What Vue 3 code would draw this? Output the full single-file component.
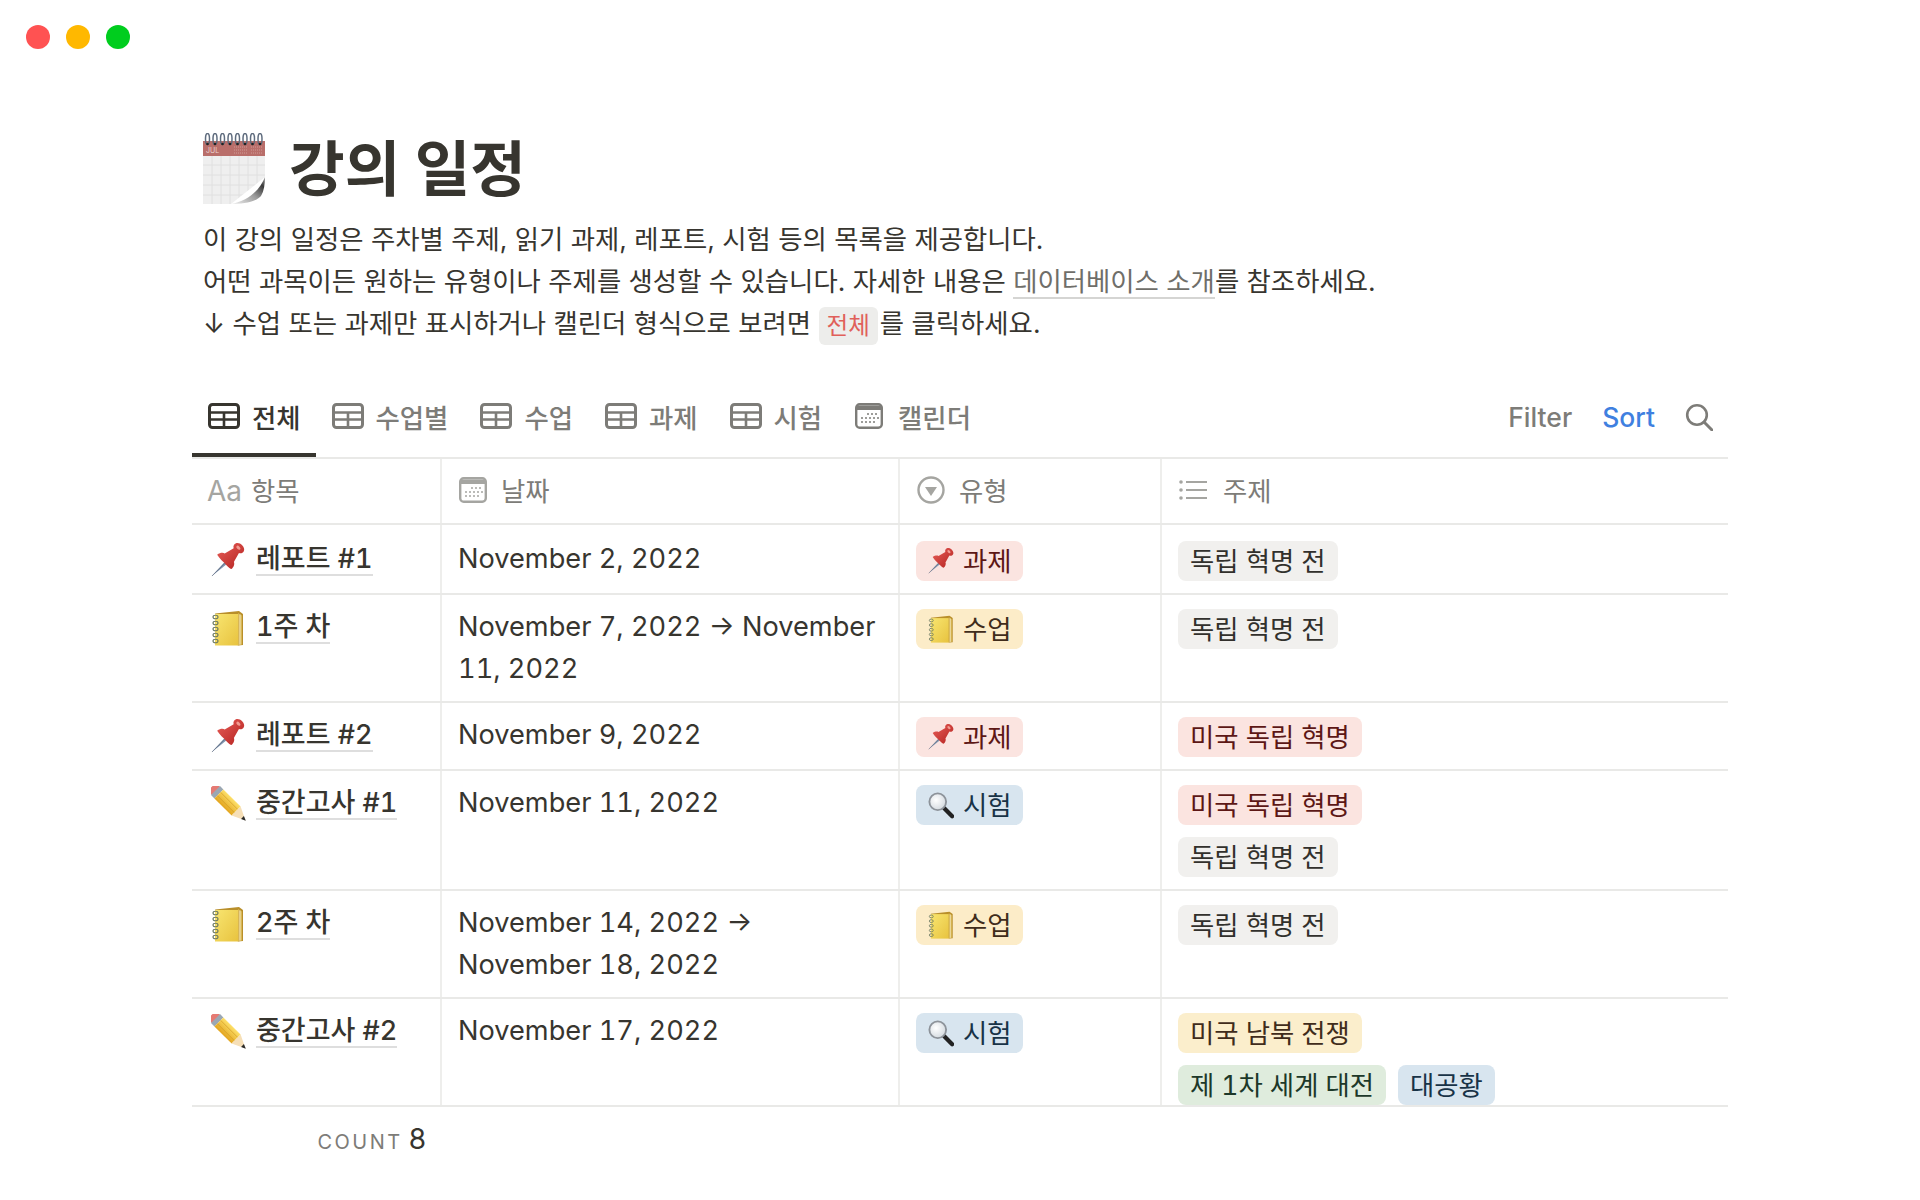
<script setup>
const tabs = [
  { label: '전체', icon: 'table', active: true },
  { label: '수업별', icon: 'table' },
  { label: '수업', icon: 'table' },
  { label: '과제', icon: 'table' },
  { label: '시험', icon: 'table' },
  { label: '캘린더', icon: 'cal' }
]

const columns = [
  { key: 'name', label: '항목' },
  { key: 'date', label: '날짜', icon: 'cal' },
  { key: 'type', label: '유형', icon: 'select' },
  { key: 'topic', label: '주제', icon: 'list' }
]

// type -> emoji + tag colour
const types = {
  report: { label: '과제', emoji: 'pin', color: 'red' },
  lesson: { label: '수업', emoji: 'note', color: 'yellow' },
  exam: { label: '시험', emoji: 'glass', color: 'blue' }
}

const before = { label: '독립 혁명 전', color: 'gray' }
const revolution = { label: '미국 독립 혁명', color: 'red' }

const rows = [
  { emoji: 'pin', name: '레포트 #1', date: 'November 2, 2022', type: 'report', topics: [before] },
  { emoji: 'note', name: '1주 차', date: 'November 7, 2022 → November 11, 2022', type: 'lesson', topics: [before] },
  { emoji: 'pin', name: '레포트 #2', date: 'November 9, 2022', type: 'report', topics: [revolution] },
  { emoji: 'pencil', name: '중간고사 #1', date: 'November 11, 2022', type: 'exam', topics: [revolution, before] },
  { emoji: 'note', name: '2주 차', date: 'November 14, 2022 → November 18, 2022', type: 'lesson', topics: [before] },
  {
    emoji: 'pencil',
    name: '중간고사 #2',
    date: 'November 17, 2022',
    type: 'exam',
    topics: [
      { label: '미국 남북 전쟁', color: 'sand' },
      { label: '제 1차 세계 대전', color: 'green' },
      { label: '대공황', color: 'blue' }
    ]
  }
]
</script>

<template>
  <div class="page">
    <!-- shared icons and emoji artwork -->
    <svg class="defs" aria-hidden="true">
      <defs>
        <linearGradient id="pinRed" x1="0" y1="0" x2="1" y2="1">
          <stop offset="0" stop-color="#e8605a" />
          <stop offset="1" stop-color="#b3201e" />
        </linearGradient>
        <linearGradient id="noteYellow" x1="0" y1="0" x2="1" y2="1">
          <stop offset="0" stop-color="#f8e570" />
          <stop offset="1" stop-color="#e8c33f" />
        </linearGradient>
        <linearGradient id="pencilBody" x1="0" y1="0" x2="0" y2="1">
          <stop offset="0" stop-color="#fde06a" />
          <stop offset="1" stop-color="#e3a51e" />
        </linearGradient>
        <linearGradient id="curl" x1="0" y1="1" x2="1" y2="0">
          <stop offset="0" stop-color="#f4f4f4" />
          <stop offset="0.5" stop-color="#9a9a9a" />
          <stop offset="0.8" stop-color="#3a3a3a" />
          <stop offset="1" stop-color="#a8a8a8" />
        </linearGradient>
        <radialGradient id="glassFill" cx="0.4" cy="0.4" r="0.7">
          <stop offset="0" stop-color="#ffffff" />
          <stop offset="1" stop-color="#cfd6dc" />
        </radialGradient>
      </defs>

      <symbol id="table" viewBox="0 0 32 26">
        <rect x="1.5" y="1.5" width="29" height="23" rx="3" fill="none" stroke="currentColor" stroke-width="3" />
        <path d="M2 9.5h28M2 16.5h28M16 9.5v15" fill="none" stroke="currentColor" stroke-width="2.6" />
      </symbol>
      <symbol id="cal" viewBox="0 0 28 26">
        <rect x="1.2" y="1.2" width="25.6" height="23.6" rx="3.5" fill="none" stroke="currentColor" stroke-width="2.4" />
        <path d="M2 2.5h24v4.5H2z" fill="currentColor" />
        <g fill="currentColor">
          <circle cx="13" cy="11" r="1" /><circle cx="17" cy="11" r="1" /><circle cx="21" cy="11" r="1" />
          <circle cx="7" cy="15" r="1" /><circle cx="11" cy="15" r="1" /><circle cx="15" cy="15" r="1" /><circle cx="19" cy="15" r="1" /><circle cx="23" cy="15" r="1" />
          <circle cx="7" cy="19" r="1" /><circle cx="11" cy="19" r="1" /><circle cx="15" cy="19" r="1" /><circle cx="19" cy="19" r="1" />
        </g>
      </symbol>
      <symbol id="select" viewBox="0 0 28 28">
        <circle cx="14" cy="14" r="12.5" fill="none" stroke="currentColor" stroke-width="2.4" />
        <path d="M8 11h12l-6 9z" fill="currentColor" />
      </symbol>
      <symbol id="list" viewBox="0 0 28 24">
        <g fill="currentColor">
          <circle cx="2" cy="4" r="1.8" /><circle cx="2" cy="12" r="1.8" /><circle cx="2" cy="20" r="1.8" />
          <rect x="7" y="3" width="21" height="2" /><rect x="7" y="11" width="21" height="2" /><rect x="7" y="19" width="21" height="2" />
        </g>
      </symbol>

      <symbol id="pin" viewBox="0 0 36 36">
        <path d="M1 35L14.5 20.5l2 2z" fill="#7f93ad" />
        <path d="M1 35l13.5-14" stroke="#3e4d63" stroke-width="0.6" />
        <path d="M6.5 12.5c3-2.5 6.5-2.5 8 -1.5L24 5.5c-.8-2 .2-4 2-5 2-1 5-.3 7 1.800 2 2.200 2.800 4.700 1.600 6.700-1 1.700-3 2.400-5 1.500l-5.400 9.500c1.200 2-.3 5.800-2.600 7.500-1-.2-2.800-1.600-5.500-4.300-3-3-7-6.600-9.600-10.700z" fill="url(#pinRed)" />
        <ellipse cx="29" cy="5" rx="2.600" ry="1.600" transform="rotate(45 29 5)" fill="#f29b92" />
      </symbol>
      <symbol id="note" viewBox="0 0 32 36">
        <path d="M3 3.500L27 1l4 3v31l-5 0.500z" fill="#b98f2a" />
        <path d="M3 4h23v31.500H3z" fill="url(#noteYellow)" />
        <path d="M26 3l4 2.500v29L26 35.500z" fill="#d8b654" />
        <path d="M28 4.500v30" stroke="#f3e9c0" stroke-width="1" />
        <g fill="none" stroke="#6d7a62" stroke-width="1.100">
          <ellipse cx="3.500" cy="7" rx="2.500" ry="1.800" /><ellipse cx="3.500" cy="13" rx="2.500" ry="1.800" />
          <ellipse cx="3.500" cy="19" rx="2.500" ry="1.800" /><ellipse cx="3.500" cy="25" rx="2.500" ry="1.800" />
          <ellipse cx="3.500" cy="31" rx="2.500" ry="1.800" />
        </g>
      </symbol>
      <symbol id="pencil" viewBox="1 1 34 34">
        <g transform="rotate(45 18 18)">
          <rect x="-5" y="12" width="6" height="12" rx="3" fill="#e57a73" />
          <rect x="0" y="12" width="4.500" height="12" fill="#9ba7b3" />
          <rect x="4.500" y="12" width="23" height="12" fill="url(#pencilBody)" />
          <path d="M4.500 15.800h23M4.500 20.200h23" stroke="#c8901a" stroke-width="0.5" />
          <path d="M27.500 12L40 18 27.500 24z" fill="#f6dfb7" />
          <path d="M36 16.100L40.500 18 36 19.900z" fill="#2b2b2b" />
        </g>
      </symbol>
      <symbol id="glass" viewBox="0 0 28 28">
        <path d="M17.500 17.500l8.500 8.500" stroke="#222" stroke-width="4.600" stroke-linecap="round" />
        <circle cx="10.500" cy="10.500" r="9" fill="url(#glassFill)" stroke="#8d939a" stroke-width="2" />
      </symbol>
    </svg>

    <div class="lights">
      <span class="light red"></span>
      <span class="light amber"></span>
      <span class="light green"></span>
    </div>

    <div class="content">
      <header class="title-row">
        <svg class="title-icon" viewBox="0 0 62 71">
          <rect x="0" y="23" width="62" height="48" fill="#efefef" />
          <path d="M9 23v48M18 23v48M27 23v48M36 23v48M45 23v48M54 23v48M0 32h62M0 42h62M0 52h62M0 62h62" stroke="#e0e0e0" stroke-width="1" />
          <rect x="0" y="8" width="62" height="15" fill="#b96e6a" />
          <text x="3" y="20" font-size="7" font-family="Inter, sans-serif" fill="#ecd2cf">JUL</text>
          <path d="M31 14h14M48 14h11M31 17h14M48 17h11M31 20h14M48 20h11" stroke="#cf9a96" stroke-width="1" stroke-dasharray="1 1" />
          <path d="M62 44v27H28z" fill="#ffffff" />
          <path d="M62 44c-5 13-17 24-34 27 12 0 25-2 30-8 3-5 4-12 4-19z" fill="url(#curl)" />
          <g fill="none" stroke="#5f6c7e" stroke-width="1.500">
            <ellipse v-for="n in 8" :key="n" :cx="(n - 1) * 7.500 + 4.500" cy="6" rx="2" ry="5.500" />
          </g>
          <g fill="#222"><circle v-for="n in 8" :key="n" :cx="(n - 1) * 7.500 + 4.500" cy="11" r="1.300" /></g>
        </svg>
        <h1>강의 일정</h1>
      </header>

      <div class="desc">
        <p>이 강의 일정은 주차별 주제, 읽기 과제, 레포트, 시험 등의 목록을 제공합니다.</p>
        <p>어떤 과목이든 원하는 유형이나 주제를 생성할 수 있습니다. 자세한 내용은 <a class="link">데이터베이스 소개</a>를 참조하세요.</p>
        <p>↓ 수업 또는 과제만 표시하거나 캘린더 형식으로 보려면 <code class="pill">전체</code>를 클릭하세요.</p>
      </div>

      <div class="toolbar">
        <nav class="tabs">
          <div v-for="tab in tabs" :key="tab.label" class="tab" :class="[tab.icon, { active: tab.active }]">
            <svg class="tab-icon" :class="tab.icon"><use :href="`#${tab.icon}`" /></svg>
            <span>{{ tab.label }}</span>
          </div>
        </nav>
        <div class="actions">
          <span>Filter</span>
          <span class="sort">Sort</span>
          <svg class="search" viewBox="0 0 28 28">
            <circle cx="12" cy="12" r="9.800" fill="none" stroke="currentColor" stroke-width="2.600" />
            <path d="M19 19l8 8" stroke="currentColor" stroke-width="3" stroke-linecap="round" />
          </svg>
        </div>
      </div>

      <div class="table">
        <div class="row head">
          <div v-for="col in columns" :key="col.key" class="cell head-cell" :class="col.key">
            <span v-if="col.key === 'name'" class="aa">Aa</span>
            <svg v-else class="head-icon" :class="col.icon"><use :href="`#${col.icon}`" /></svg>
            <span>{{ col.label }}</span>
          </div>
        </div>

        <div v-for="row in rows" :key="row.name" class="row body">
          <div class="cell name">
            <svg class="row-emoji" :class="row.emoji"><use :href="`#${row.emoji}`" /></svg>
            <span class="row-title">{{ row.name }}</span>
          </div>
          <div class="cell date">{{ row.date }}</div>
          <div class="cell type">
            <span class="tag" :class="types[row.type].color">
              <svg class="tag-emoji"><use :href="`#${types[row.type].emoji}`" /></svg>
              {{ types[row.type].label }}
            </span>
          </div>
          <div class="cell topic">
            <span v-for="t in row.topics" :key="t.label" class="tag" :class="t.color">{{ t.label }}</span>
          </div>
        </div>
      </div>

      <div class="footer">
        <div class="count"><span class="count-label">COUNT</span> <span class="count-num">8</span></div>
      </div>
    </div>
  </div>
</template>

<style>
body {
  background: #fff;
}
</style>

<style scoped>
.page {
  height: 1200px;
  overflow: hidden;
  background: #fff;
  color: #37352f;
  font-family: Inter, "Noto Sans CJK KR", sans-serif;
}

.defs {
  position: absolute;
  width: 0;
  height: 0;
}

.lights {
  display: flex;
  gap: 16px;
  padding: 25px 0 0 26px;
}

.light {
  width: 24px;
  height: 24px;
  border-radius: 50%;
}

.light.red { background: #ff5252; }
.light.amber { background: #ffb800; }
.light.green { background: #00cd1e; }

.content {
  width: 1536px;
  margin-left: 192px;
}

.title-row {
  display: flex;
  align-items: center;
  gap: 24px;
  height: 78px;
  margin-top: 80px;
  padding-left: 11px;
}

.title-icon {
  flex: none;
  width: 62px;
  height: 71px;
}

h1 {
  margin: 1px 0 0;
  font-size: 60.500px;
  font-weight: 700;
  line-height: 78px;
}

.desc {
  margin-top: 11px;
  padding-left: 11px;
  font-size: 26.400px;
  line-height: 42px;
}

.desc p {
  margin: 0;
}

.link {
  color: #6f6e69;
  border-bottom: 2px solid #d5d5d3;
}

.pill {
  display: inline-block;
  height: 38px;
  margin: 5px 2px -1px 0;
  padding: 0 8px;
  border-radius: 6px;
  background: #ededeb;
  color: #e0605a;
  font-family: inherit;
  font-size: 23.500px;
  line-height: 38px;
  vertical-align: top;
}

.toolbar {
  display: flex;
  justify-content: space-between;
  margin-top: 44px;
  border-bottom: 2px solid #e9e9e7;
}

.tabs {
  display: flex;
}

.tab {
  display: flex;
  align-items: center;
  gap: 12px;
  height: 69px;
  padding: 7px 16px 20px;
  box-sizing: border-box;
  color: #7d7c78;
  font-size: 26.400px;
  font-weight: 500;
}

.tab.active {
  color: #37352f;
  border-bottom: 4px solid #37352f;
  padding: 7px 15px 16px 16px;
}

.tab.cal {
  gap: 15px;
  padding-left: 17px;
}

.tab-icon {
  width: 32px;
  height: 26px;
}

.tab-icon.cal {
  width: 28px;
}

.actions {
  display: flex;
  align-items: center;
  gap: 30px;
  height: 58px;
  padding-right: 15px;
  color: #7d7c78;
  font-size: 26.500px;
  font-weight: 500;
}

.sort {
  color: #3f80e0;
}

.search {
  width: 28px;
  height: 28px;
}

.row {
  display: grid;
  grid-template-columns: 250px 458px 262px 566px;
  border-bottom: 2px solid #e9e9e7;
}

.cell {
  min-width: 0;
  box-sizing: border-box;
  padding: 10px 14px 12px 16px;
  border-right: 2px solid #eeeeec;
  font-size: 27px;
  font-feature-settings: "tnum";
  line-height: 42px;
}

.cell:last-child {
  border-right: 0;
}

.head .cell {
  height: 64px;
  padding-top: 11px;
  padding-bottom: 0;
}

.head-cell {
  display: flex;
  align-items: flex-start;
  gap: 14px;
  color: #7d7c78;
  font-size: 26.400px;
}

.aa {
  color: #a5a5a1;
  font-size: 28px;
  margin-right: -2px;
}

.head-icon {
  width: 28px;
  height: 28px;
  margin: 6px 0 0 1px;
  color: #a5a5a1;
}

.head-icon.select {
  margin: 6px 2px 0 1px;
}

.head-icon.list {
  height: 24px;
  margin: 8px 4px 0 1px;
}

.row.body .cell.date {
  padding-top: 11px;
  padding-bottom: 11px;
  font-size: 27.200px;
}

.cell.name {
  display: flex;
  align-items: flex-start;
  gap: 11px;
  padding-left: 19px;
}

.head .cell.name {
  padding-left: 15px;
}

.row-emoji {
  flex: none;
  width: 34px;
  height: 36px;
  margin-top: 5px;
}

.row-emoji.pencil {
  width: 36px;
  margin-right: -2px;
}

.row-title {
  display: inline-block;
  margin-top: 6px;
  border-bottom: 2px solid #dedede;
  font-size: 27px;
  font-weight: 500;
  line-height: 31px;
  white-space: nowrap;
}

.type,
.topic {
  display: flex;
  flex-wrap: wrap;
  align-content: flex-start;
  gap: 12px;
  padding-top: 14px;
}

/* topic tags wrap earlier than the column is wide */
.cell.topic {
  padding-right: 210px;
}

.row.body:nth-child(2) .cell {
  padding-top: 12px;
}

.row.body:nth-child(2) .cell.date {
  padding-top: 13px;
}

.row.body:nth-child(2) .type,
.row.body:nth-child(2) .topic {
  padding-top: 16px;
}

.row.body:last-child .cell {
  padding-bottom: 0;
}

.tag {
  display: inline-flex;
  align-items: center;
  gap: 9px;
  height: 40px;
  padding: 0 11px 0 12px;
  border-radius: 8px;
  font-size: 26.400px;
  line-height: 40px;
  white-space: nowrap;
}

.topic .tag {
  padding: 0 12px;
}

.tag-emoji {
  width: 26px;
  height: 28px;
}

.tag.gray { background: #f1f0ee; color: #32302c; }
.tag.red { background: #fbe4e0; color: #5d1715; }
.tag.yellow { background: #fcecc8; color: #402c1b; }
.tag.sand { background: #fbeecc; color: #402c1b; }
.tag.blue { background: #d8e5ef; color: #183347; }
.tag.green { background: #dfecdd; color: #1c3829; }

.footer {
  width: 250px;
}

.count {
  display: flex;
  justify-content: flex-end;
  align-items: baseline;
  gap: 6px;
  padding: 15px 16px 0 0;
}

.count-label {
  color: #7d7c78;
  font-size: 20px;
  letter-spacing: 2.500px;
}

.count-num {
  font-size: 28px;
}
</style>
